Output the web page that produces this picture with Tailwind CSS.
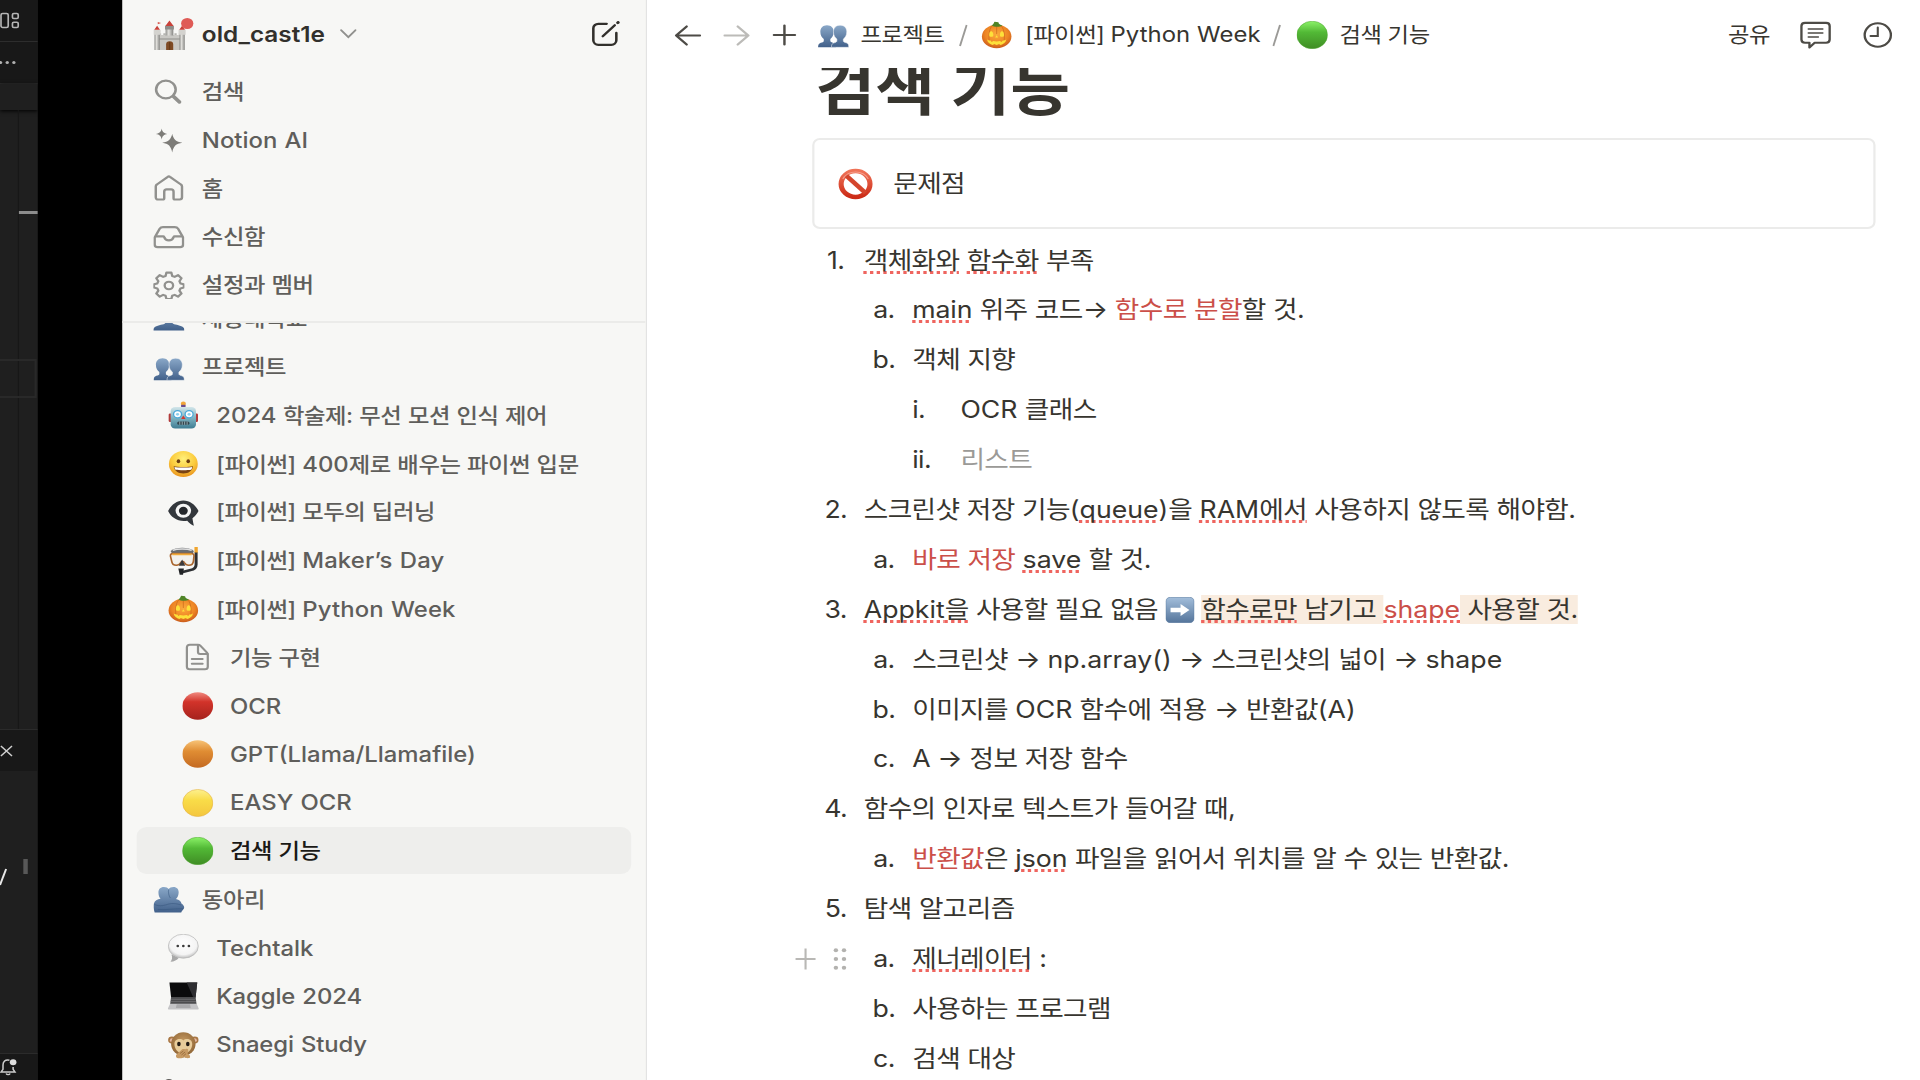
<!DOCTYPE html>
<html lang="ko">
<head>
<meta charset="utf-8">
<title>검색 기능</title>
<script src="https://cdn.jsdelivr.net/npm/@tailwindcss/browser@4"></script>
</head>
<body class="h-[1080px] w-[1920px] overflow-hidden bg-black font-[Inter,'Noto_Sans_CJK_KR',sans-serif]">

<!-- shared icon symbols -->
<svg class="absolute h-0 w-0" aria-hidden="true">
  <defs>
    <linearGradient id="gBlue" x1="0" y1="0" x2="0" y2="1"><stop offset="0" stop-color="#8aa8c8"/><stop offset="1" stop-color="#41608a"/></linearGradient>
    <linearGradient id="gRed" x1="0" y1="0" x2="0" y2="1"><stop offset="0" stop-color="#f08a80"/><stop offset=".35" stop-color="#d2332a"/><stop offset="1" stop-color="#a5231d"/></linearGradient>
    <linearGradient id="gOrange" x1="0" y1="0" x2="0" y2="1"><stop offset="0" stop-color="#f7c377"/><stop offset=".4" stop-color="#e08d33"/><stop offset="1" stop-color="#c46a22"/></linearGradient>
    <linearGradient id="gYellow" x1="0" y1="0" x2="0" y2="1"><stop offset="0" stop-color="#fdf08e"/><stop offset=".4" stop-color="#f9dc48"/><stop offset="1" stop-color="#f4c63e"/></linearGradient>
    <linearGradient id="gGreen" x1="0" y1="0" x2="0" y2="1"><stop offset="0" stop-color="#8bf268"/><stop offset=".4" stop-color="#52b936"/><stop offset="1" stop-color="#3f8c24"/></linearGradient>
    <radialGradient id="gFace" cx=".5" cy=".3" r=".75"><stop offset="0" stop-color="#fff07a"/><stop offset=".55" stop-color="#fbcb3c"/><stop offset="1" stop-color="#e78d1c"/></radialGradient>
    <radialGradient id="gPump" cx=".5" cy=".4" r=".65"><stop offset="0" stop-color="#fbab3c"/><stop offset=".6" stop-color="#ee8524"/><stop offset="1" stop-color="#c2521a"/></radialGradient>
    <linearGradient id="gBot" x1="0" y1="0" x2="0" y2="1"><stop offset="0" stop-color="#d3e6ea"/><stop offset=".5" stop-color="#7fb4c2"/><stop offset="1" stop-color="#3f7c92"/></linearGradient>
    <radialGradient id="gBubble" cx=".5" cy=".4" r=".6"><stop offset="0" stop-color="#fff"/><stop offset=".75" stop-color="#f4f4f4"/><stop offset="1" stop-color="#bdbdbd"/></radialGradient>
    <radialGradient id="gMonkey" cx=".5" cy=".4" r=".65"><stop offset="0" stop-color="#c69a62"/><stop offset="1" stop-color="#8c6233"/></radialGradient>
    <linearGradient id="gWall" x1="0" y1="0" x2="1" y2="0"><stop offset="0" stop-color="#8f8f8c"/><stop offset=".4" stop-color="#e2e1dd"/><stop offset="1" stop-color="#858582"/></linearGradient>
    <linearGradient id="gKey" x1="0" y1="0" x2="0" y2="1"><stop offset="0" stop-color="#a3bedb"/><stop offset="1" stop-color="#55759b"/></linearGradient>
    <linearGradient id="gBan" x1="0" y1="0" x2="0" y2="1"><stop offset="0" stop-color="#ef7257"/><stop offset="1" stop-color="#cc2c17"/></linearGradient>
    <symbol id="people" viewBox="0 0 28 28">
      <path fill="url(#gBlue)" d="M8.3 3.2c3.900 0 6 2.800 6 6.600 0 3.400-1.400 6-3 7.200v2.300c.4 1.100 3 1.500 4.100 2.600.6.7.9 2 .9 3.400H.3c0-2 .3-3.200 1.300-3.900 1.300-.8 3.400-1 3.800-2.100V17c-1.700-1.200-3.100-3.800-3.100-7.200 0-3.800 2.100-6.600 6-6.600z"/>
      <path fill="url(#gBlue)" stroke="#f4f6f8" stroke-width=".5" d="M20.100 3.200c3.900 0 6 2.800 6 6.600 0 3.400-1.400 6-3.100 7.200v2.300c.4 1.100 2.700 1.300 3.700 2.100 1 .7 1.200 1.900 1.200 3.900H12.300c0-2 .3-3.200 1.300-3.900 1.200-.8 3.200-1 3.600-2.100V17c-1.700-1.200-3.100-3.800-3.100-7.200 0-3.800 2.100-6.600 6-6.600z"/>
    </symbol>
    <symbol id="person" viewBox="0 0 28 28">
      <path fill="url(#gBlue)" d="M14 1c4.500 0 6.500 3.200 6.500 7 0 3.400-1.500 6-3.200 7.200v3c1 1.400 6.500 1.700 9 3.600 1.200.9 1.700 2 1.700 3.600H0c0-1.600.5-2.700 1.700-3.600 2.500-1.900 8-2.200 9-3.600v-3C9 14 7.500 11.400 7.500 8c0-3.800 2-7 6.500-7z"/>
    </symbol>
    <symbol id="pumpkin" viewBox="0 0 28 28">
      <ellipse cx="14" cy="15.500" rx="13.300" ry="11.800" fill="url(#gPump)"/>
      <path d="M10 4.800C6.500 8 5.800 21 9.500 26M18 4.800c3.500 3.200 4.200 16.200.5 21.200M14 5v8" stroke="#c9651b" stroke-width=".9" fill="none" opacity=".7"/>
      <path d="M9.500 4.300c2-1.200 1.800-2.600 2.600-3.600l3.500.5c.1 1.500.8 2.300 3.400 3.200-2 1.900-7.300 2-9.500-.1z" fill="#4f8426"/>
      <path d="M7.500 15.200c-.6-2.700.5-5 1.600-5s2.300 2.300 1.800 5c-1 .8-2.500.8-3.400 0zM17.100 15.200c-.5-2.700.6-5 1.700-5s2.200 2.300 1.700 5c-1 .8-2.500.8-3.400 0zM14 14.200l1.300 2.300h-2.600zM5.300 18.200c1 1.100 2.200 1.400 3.300 1.400l.9 1.300 1.500-.9c2 .5 4 .5 6 0l1.500.9.9-1.300c1.100 0 2.300-.3 3.300-1.400-.5 3.200-2.500 5-5.300 5.900l-1.200-1.200-2.200 1.200-2.200-1.200-1.300 1.200c-2.700-.9-4.700-2.700-5.200-5.900z" fill="#fde03a"/>
    </symbol>
    <symbol id="green" viewBox="0 0 28 28"><circle cx="14" cy="14" r="13.800" fill="url(#gGreen)" stroke="#4ea52f" stroke-width=".5"/></symbol>
  </defs>
</svg>

<div class="flex h-[1080px] w-[1728px] origin-top-left scale-x-[1.11111] bg-black">

  <!-- editor window edge -->
  <aside class="relative flex w-[34px] shrink-0 flex-col overflow-hidden bg-[#1f1f1f]">
    <div class="flex h-[42px] items-center border-b border-[#2d2d2d] bg-[#181818]">
      <svg class="h-6 w-[18px] shrink-0" viewBox="0 0 18 24" fill="none" stroke="#b4b4b4" stroke-width="1.500"><rect x=".9" y="4.500" width="6.500" height="14" rx="1.500"/><rect x="11.200" y="4.500" width="5.200" height="5" rx="1.200"/><rect x="11.200" y="13.200" width="5.200" height="5.300" rx="1.200"/></svg>
    </div>
    <div class="-ml-[1px] flex h-[42px] items-center gap-[3.500px] border-b border-[#2d2d2d] bg-[#181818]">
      <i class="size-[2.500px] rounded-full bg-[#b0b0b0]"></i><i class="size-[2.500px] rounded-full bg-[#b0b0b0]"></i><i class="size-[2.500px] rounded-full bg-[#b0b0b0]"></i>
    </div>
    <div class="h-[26px] shrink-0 bg-[#1f1f1f] shadow-[0_1px_4px_#000]"></div>
    <div class="flex h-[619px] shrink-0">
      <div class="w-[17px] border-r border-[#171717]"></div>
      <div class="flex-1 pt-[101px]"><div class="h-[2.500px] bg-[#8d8d8d]"></div></div>
    </div>
    <div class="absolute top-[359px] -left-1 h-[39px] w-[37px] border-2 border-[#292929]"></div>
    <div class="flex h-[42px] shrink-0 items-center border-t border-[#2b2b2b] bg-[#181818]">
      <svg class="h-3 w-3" viewBox="0 0 12 12" stroke="#cfcfcf" stroke-width="1.300"><path d="M.8 1l10 10M10.800 1l-10 10"/></svg>
    </div>
    <div class="flex flex-1 items-start pt-[88px]">
      <svg class="mt-[9px] h-[20px] w-[7px]" viewBox="0 0 7 20" stroke="#e8e8e8" stroke-width="1.800"><path d="M5.500 1L0 17"/></svg>
      <div class="ml-[14px] h-[15px] w-[4px] bg-[#585858]"></div>
    </div>
    <div class="flex h-[27px] items-center border-t border-[#2b2b2b] bg-[#181818]">
      <svg class="-ml-px h-[18px] w-[17px]" viewBox="0 0 17 18" fill="none" stroke="#cccccc" stroke-width="1.400"><path d="M9.500 2.200C5.500 1.200 3.700 4 3.700 7v4.300L2 14h12.500l-1.700-2.700V9M6.500 15.500c.7 1.500 2.900 1.500 3.600 0"/><circle cx="12.800" cy="4.300" r="3" fill="#ddd" stroke="none"/></svg>
    </div>
  </aside>
  <div class="w-[76px] shrink-0 bg-black"></div>

  <!-- sidebar -->
  <nav class="flex w-[472px] shrink-0 flex-col overflow-hidden border-r border-[#efefed] bg-[#f7f7f5] text-[21px] font-medium tracking-[-0.4px] text-[#5f5e5b] [word-spacing:0.7px]">
    <div class="shrink-0 border-b-2 border-[#ebebe9] px-[12.600px] pb-[12px]">
      <div class="flex h-[67.300px] items-center pr-[10px] pl-[15.700px]">
        <div class="relative size-[28px]">
          <svg class="size-[30px]" viewBox="0 0 30 30">
            <rect x="5" y="15" width="19" height="15" fill="#c9c8c4"/><path d="M5 15v-1.800h2V15h2v-1.800h2V15h8v-1.800h2V15h2v-1.800h1V15z" fill="#b5b4b0"/>
            <path d="M5 19h19" stroke="#8f8e8a"/>
            <rect x="1" y="11" width="4.800" height="19" fill="url(#gWall)"/><rect x="23.500" y="11" width="4.800" height="19" fill="url(#gWall)"/>
            <rect x="11" y="5.500" width="7" height="10" fill="url(#gWall)"/><rect x="10.500" y="6" width="8" height="3.500" fill="#8e8d8a"/>
            <rect x=".2" y="9.800" width="6.400" height="5" fill="#d4d3cf"/><rect x="22.700" y="9.800" width="6.400" height="5" fill="#d4d3cf"/>
            <path d="M.8 9.800l2.600-4 2.600 4zM10.800 6l3.700-5.500L18.200 6zM23.300 9.800l2.600-4 2.600 4z" fill="#c9423a"/><path d="M4 2l3 1-3 1.200z" fill="#d8544a"/>
            <path d="M11.500 30v-5.500a3.200 3.200 0 016.400 0V30z" fill="#7e4a24"/><path d="M14.700 22v8" stroke="#5c3213" stroke-width=".7"/>
          </svg>
          <i class="absolute -top-[2px] left-[24.500px] size-[11px] rounded-full bg-[#df5b56]"></i>
        </div>
        <span class="ml-[15.400px] pt-px text-[21.900px] font-semibold tracking-normal text-[#32302c]">old_cast1e</span>
        <svg class="ml-[13.500px] h-[10px] w-[15px]" viewBox="0 0 15 10" fill="none" stroke="#91918e" stroke-width="1.700" stroke-linecap="round"><path d="M1 1.200l6.500 7 6.500-7"/></svg>
        <svg class="mt-px ml-auto size-[26px]" viewBox="0 0 26 26" fill="none" stroke="#32302c" stroke-width="2.300" stroke-linecap="round" stroke-linejoin="round"><path d="M14 2.800H6.500a4.500 4.500 0 00-4.500 4.500v12A4.500 4.500 0 006.500 23.800h11.700a4.500 4.500 0 004.500-4.500V12"/><path d="M10.500 15.200L21.300 4.300"/><path d="M24 1.700l.3-.3" stroke-width="2.800"/></svg>
      </div>
      <div class="flex h-[48.400px] items-center gap-[15.400px] pl-[15.700px]">
        <svg class="size-[28px]" viewBox="0 0 28 28" fill="none" stroke="#91918e" stroke-linecap="round"><circle cx="11.300" cy="12.500" r="8.800" stroke-width="2.300"/><path d="M18.200 19.500l5.300 5.500" stroke-width="3.400"/></svg>
        <span>검색</span>
      </div>
      <div class="flex h-[48.400px] items-center gap-[15.400px] pl-[15.700px]">
        <svg class="size-[28px]" viewBox="0 0 28 28" fill="#7d7c78"><path d="M17 7.700c1.100 5.500 3.200 8 9.200 9-6 1-8.100 3.400-9.200 9.700-1.100-6.300-3.200-8.700-9-9.700 5.800-1 7.900-3.500 9-9zM7.500 2.500c.6 3.400 1.900 4.800 5.300 5.500-3.400.6-4.700 2-5.300 5.400-.6-3.400-1.900-4.800-5.300-5.400 3.400-.7 4.700-2.100 5.300-5.500z"/></svg>
        <span class="text-[21.500px] tracking-normal">Notion AI</span>
      </div>
      <div class="flex h-[48.400px] items-center gap-[15.400px] pl-[15.700px]">
        <svg class="size-[28px]" viewBox="0 0 28 28" fill="none" stroke="#91918e" stroke-width="2.200" stroke-linejoin="round"><path d="M2.200 12.500c0-.8.300-1.500 1-2L13 2.800c.6-.5 1.400-.5 2 0l9.800 7.700c.7.500 1 1.200 1 2v10.800c0 1.300-.8 2.200-2.100 2.200h-4.200c-.8 0-1.300-.5-1.300-1.300v-6.400c0-1.500-.8-2.400-2.200-2.400h-4c-1.400 0-2.200.9-2.200 2.400v6.400c0 .8-.5 1.300-1.300 1.300H4.300c-1.300 0-2.100-.9-2.100-2.200z"/></svg>
        <span>홈</span>
      </div>
      <div class="flex h-[48.400px] items-center gap-[15.400px] pl-[15.700px]">
        <svg class="size-[28px]" viewBox="0 0 28 28" fill="none" stroke="#91918e" stroke-width="2.200" stroke-linejoin="round"><path d="M1.200 14.500l4.500-8.700c.7-1.200 1.600-1.700 3-1.700h10.600c1.400 0 2.300.5 3 1.700l4.500 8.700v7c0 1.700-1 2.700-2.700 2.700H3.900c-1.700 0-2.700-1-2.700-2.700z"/><path d="M1.500 13.300h7.300c.5 0 .8.300 1 .8.600 2 2.100 3.300 4.200 3.300s3.600-1.300 4.200-3.300c.2-.5.500-.8 1-.8h7.300"/></svg>
        <span>수신함</span>
      </div>
      <div class="flex h-[48.400px] items-center gap-[15.400px] pl-[15.700px]">
        <svg class="size-[28px]" viewBox="0 0 28 28" fill="none" stroke="#91918e" stroke-width="2.100" stroke-linejoin="round"><path d="M11.800 1.600h4.400l.8 3.400 2.200.9 3-1.800 3.100 3.100-1.800 3 .9 2.200 3 .8v3.400l-3 .8-.9 2.200 1.800 3-3.100 3.100-3-1.800-2.200.9-.8 3.200h-4.400l-.8-3.200-2.200-.9-3 1.800-3.100-3.100 1.800-3-.9-2.200-3-.8v-3.400l3-.8.9-2.200-1.800-3 3.100-3.100 3 1.800 2.200-.9z"/><circle cx="14" cy="14.500" r="3.800"/></svg>
        <span>설정과 멤버</span>
      </div>
    </div>

    <div class="min-h-0 flex-1 overflow-hidden px-[12.600px]">
      <div class="-mt-[28.800px] flex h-[48.400px] items-center gap-[15.400px] pl-[15.700px]"><svg class="size-[28px]"><use href="#person"/></svg><span>세종대학교</span></div>
      <div class="flex h-[48.400px] items-center gap-[15.400px] pl-[15.700px]"><svg class="mt-[3px] size-[28px]"><use href="#people"/></svg><span>프로젝트</span></div>

      <div class="flex h-[48.400px] items-center gap-[15.200px] pl-[28.900px]">
        <svg class="size-[28px]" viewBox="0 0 28 28"><circle cx="14" cy="2.800" r="2.300" fill="#f2a63a"/><rect x="12" y="3.800" width="4" height="3" fill="#6b4b8d"/><rect x=".8" y="12.500" width="3.500" height="8.500" rx="1.200" fill="#b23a3a"/><rect x="23.700" y="12.500" width="3.500" height="8.500" rx="1.200" fill="#b23a3a"/><rect x="2.600" y="6" width="22.800" height="21.500" rx="4" fill="url(#gBot)"/><circle cx="8.800" cy="13.300" r="3.600" fill="#fff" stroke="#4ca8d8" stroke-width="1.200"/><circle cx="19.200" cy="13.300" r="3.600" fill="#fff" stroke="#4ca8d8" stroke-width="1.200"/><circle cx="8.800" cy="13.300" r="1.400" fill="#8fd0ee"/><circle cx="19.200" cy="13.300" r="1.400" fill="#8fd0ee"/><path d="M14 14.500l2 3.600h-4z" fill="#d8352d"/><rect x="8.500" y="20.500" width="11" height="3.300" rx="1.500" fill="#33444c"/><path d="M10.800 20.500v3.300M13 20.500v3.300M15.200 20.500v3.300M17.400 20.500v3.300" stroke="#b8d0d6" stroke-width=".7"/></svg>
        <span><span class="text-[21.500px] tracking-normal">2024</span> 학술제: 무선 모션 인식 제어</span>
      </div>
      <div class="flex h-[48.400px] items-center gap-[15.200px] pl-[28.900px]">
        <svg class="size-[28px]" viewBox="0 0 28 28"><circle cx="14" cy="14" r="13" fill="url(#gFace)"/><ellipse cx="9.600" cy="11.200" rx="1.600" ry="2" fill="#6b3c10"/><ellipse cx="18.400" cy="11.200" rx="1.600" ry="2" fill="#6b3c10"/><path d="M5.300 16.200c2.500.9 14.900.9 17.400 0-.5 4.600-3.900 7.200-8.700 7.200s-8.200-2.600-8.700-7.200z" fill="#7a4314"/><path d="M6 17c2.600.7 13.400.7 16 0-.2 1.500-.5 2.300-1 2.800-3 .6-11 .6-14 0-.5-.5-.8-1.300-1-2.800z" fill="#fff"/></svg>
        <span>[파이썬] <span class="text-[21.500px] tracking-normal">400</span>제로 배우는 파이썬 입문</span>
      </div>
      <div class="flex h-[48.400px] items-center gap-[15.200px] pl-[28.900px]">
        <svg class="size-[28px]" viewBox="0 0 28 28"><path d="M.3 13C3 7 8 2.500 14 2.500S25 7 27.700 13c-1.300 2.800-3.300 5.400-5.500 7.200.4 3 .8 5 1.300 7.600-2-1-4.500-3-6-5.100C9.300 24.200 3 19.500.3 13z" fill="#33373c"/><circle cx="14" cy="12.800" r="7" fill="#f5f5f5"/><circle cx="14" cy="12.800" r="4" fill="#24272b"/></svg>
        <span>[파이썬] 모두의 딥러닝</span>
      </div>
      <div class="flex h-[48.400px] items-center gap-[15.200px] pl-[28.900px]">
        <svg class="size-[28px]" viewBox="0 0 28 28" fill="none"><path d="M25.500 0v6" stroke="#f0a52e" stroke-width="3"/><path d="M25.500 5.500v12c0 4-2 5-5 5.500l-7 2" stroke="#2e3033" stroke-width="2.700"/><path d="M9.500 21.500h5l-.8 6.200h-3z" fill="#222427"/><path d="M2.500 4c5-4.300 16-4.300 21 0l-1 3H4z" fill="#6a6d70"/><path d="M4.500 3.400c4-1.800 13-1.800 17 0" stroke="#e0e0e0" stroke-width="1.400"/><path d="M4.500 6.500h16.800c1.700 0 2.400 1 2.300 2.600l-.5 5c-.3 2.800-1.700 4.200-4.200 4.200-2.400 0-3.200-1.300-4-2.800-.6-1.200-2.600-1.200-3.200 0-.8 1.500-1.600 2.800-4 2.800-2.500 0-3.900-1.400-4.200-4.200L2.400 9.100c-.1-1.600.4-2.600 2.100-2.600z" fill="#f3f1ec" stroke="#a8642c" stroke-width="1.500"/><path d="M4 7.300h17.500" stroke="#f1ab3a" stroke-width="1.700"/><path d="M12.900 12.500l2.900 6.300H10z" fill="#3a3a3c"/></svg>
        <span>[파이썬] <span class="text-[21.500px] tracking-[0.100px]">Maker’s Day</span></span>
      </div>
      <div class="flex h-[48.400px] items-center gap-[15.200px] pl-[28.900px]"><svg class="size-[28px]"><use href="#pumpkin"/></svg><span>[파이썬] <span class="text-[21.500px] tracking-[0.100px]">Python Week</span></span></div>

      <div class="flex h-[48.400px] items-center gap-[15px] pl-[41.400px]">
        <svg class="size-[28px]" viewBox="0 0 28 28" fill="none" stroke="#91918e" stroke-width="2" stroke-linejoin="round" stroke-linecap="round"><path d="M4.200 4.400c0-1.700.9-2.600 2.600-2.600h7.400c.9 0 1.500.2 2.100.9l6 6.900c.5.600.7 1.100.7 1.900v12.200c0 1.700-.9 2.600-2.600 2.600H6.800c-1.700 0-2.600-.9-2.600-2.600z"/><path d="M14.200 2v7c0 1.300.7 2 2 2h6.600M8.700 16h9.600M8.700 20.800h9.600"/></svg>
        <span>기능 구현</span>
      </div>
      <div class="flex h-[48.400px] items-center gap-[15px] pl-[41.400px]"><svg class="size-[28px]" viewBox="0 0 28 28"><circle cx="14" cy="14" r="13.800" fill="url(#gRed)"/></svg><span class="text-[21.500px] tracking-normal">OCR</span></div>
      <div class="flex h-[48.400px] items-center gap-[15px] pl-[41.400px]"><svg class="size-[28px]" viewBox="0 0 28 28"><circle cx="14" cy="14" r="13.800" fill="url(#gOrange)"/></svg><span class="text-[21.500px] tracking-normal">GPT(Llama/Llamafile)</span></div>
      <div class="flex h-[48.400px] items-center gap-[15px] pl-[41.400px]"><svg class="size-[28px]" viewBox="0 0 28 28"><circle cx="14" cy="14" r="13.600" fill="url(#gYellow)" stroke="#e2ad3c" stroke-width=".5"/></svg><span class="text-[21.500px] tracking-normal">EASY OCR</span></div>
      <div class="flex h-[48.400px] items-center py-[0.700px]"><div class="flex h-full w-full items-center gap-[15px] rounded-[9px] bg-[#eeeeec] pl-[41.400px] text-[#1a1916]"><svg class="size-[28px]"><use href="#green"/></svg><span>검색 기능</span></div></div>

      <div class="flex h-[48.400px] items-center gap-[15.400px] pl-[15.700px]">
        <svg class="size-[28px]" viewBox="0 0 28 28"><path fill="url(#gBlue)" d="M9.500 2c2.200 0 3.500.8 4.300 2 .8-1.200 2.200-2 4.300-2 3.200 0 4.700 2.300 4.700 5.300 0 2.800-1 5.300-2.400 6.700 3 .8 4.600 2.200 4.900 4.500 1.800 1.500 2.600 2.800 2.600 4.200-.8 2-2.300 2.800-2.800 4.800H1.200C.2 24.500 0 20.500.5 18.500c.8-3 3-4.200 6-4.700C5.200 12.300 4.600 10 4.600 7.300 4.600 4.300 6.200 2 9.500 2z"/><path d="M1 19.500c5 2.500 10 .5 13-.500s7-.5 11 1M4 24.500c7 .8 14-1 23-.8M13.800 4.500c-.6 3 .2 6.500 1.500 8.500" stroke="#35557c" stroke-width=".8" fill="none" opacity=".6"/></svg>
        <span>동아리</span>
      </div>
      <div class="flex h-[48.400px] items-center gap-[15.200px] pl-[28.900px]">
        <svg class="size-[28px]" viewBox="0 0 28 28"><path d="M3.300 20.500c1 3 .7 5-.8 7.200 3.500-.2 5.500-1.500 7.500-4z" fill="#a8a8a8"/><ellipse cx="14" cy="12.200" rx="13.500" ry="12" fill="url(#gBubble)" stroke="#b9b9b9" stroke-width=".7"/><g fill="#3b3b3b"><circle cx="9" cy="12" r="1.200"/><circle cx="14" cy="12" r="1.200"/><circle cx="19" cy="12" r="1.200"/></g></svg>
        <span class="text-[21.500px] tracking-normal">Techtalk</span>
      </div>
      <div class="flex h-[48.400px] items-center gap-[15.200px] pl-[28.900px]">
        <svg class="size-[28px]" viewBox="0 0 28 28"><path d="M1.500.5h25L25 15.500H3z" fill="#0b0b0c"/><path d="M17 .5h9.500L25 15.500h-2z" fill="#2e2e31"/><path d="M3 15h22l.9 7.200H2.100z" fill="#4b4b4d"/><path d="M3 17.300h22M2.600 19.600h22.800" stroke="#747477" stroke-width=".7"/><path d="M2.100 21.800h23.800l2 4.700c0 .7-.4 1-1.100 1H1.200c-.7 0-1.100-.3-1.100-1z" fill="#c4c4c6"/><path d="M8 22.300h12l.7 3.800H7.300z" fill="#a9a9ab"/></svg>
        <span class="text-[21.500px] tracking-[-0.100px]">Kaggle 2024</span>
      </div>
      <div class="flex h-[48.400px] items-center gap-[15.200px] pl-[28.900px]">
        <svg class="size-[28px]" viewBox="0 0 28 28"><circle cx="3.700" cy="9" r="3.400" fill="#a87744"/><circle cx="24.300" cy="9" r="3.400" fill="#a87744"/><circle cx="3.800" cy="9.200" r="1.900" fill="#e7b9a5"/><circle cx="24.200" cy="9.200" r="1.900" fill="#e7b9a5"/><ellipse cx="14" cy="13" rx="11" ry="11.700" fill="url(#gMonkey)"/><path d="M14 9.500c2-2.500 8-2 8 3.500 0 4-2.500 9.500-8 9.500S6 17 6 13c0-5.500 6-6 8-3.500z" fill="#e8cc9a"/><ellipse cx="10" cy="13" rx="1.600" ry="2.200" fill="#221a14"/><ellipse cx="18" cy="13" rx="1.600" ry="2.200" fill="#221a14"/><path d="M8 26.800c-1.300-1.500-.5-3.500 1-4.500l4-4c1-.8 2.400.4 3.300-.3 1.500-.8 2.600.5 2 2l-.6 2.600c1.800.8 2.800 2.600 2.300 4.200-2 .8-4 .4-5-.5-1.500 1-5 1.500-7 .5z" fill="#c79a63"/><path d="M11 22.500l3-2.500M12.300 24l3.300-3M14 25l2.400-2.300" stroke="#8d6234" stroke-width=".7"/></svg>
        <span class="text-[21.500px] tracking-[-0.100px]">Snaegi Study</span>
      </div>
      <div class="flex h-[48.400px] pt-[9px] pl-[22px]"><svg class="size-[28px]" viewBox="0 0 28 28"><circle cx="7" cy="6" r="5" fill="#5b5a58"/></svg></div>
    </div>
  </nav>

  <!-- page -->
  <main class="flex min-w-0 flex-1 flex-col overflow-hidden bg-white text-[#37352f]">
    <header class="flex h-[69px] shrink-0 items-center pl-[25px] text-[21px] tracking-[-0.4px]">
      <svg class="h-[24px] w-[24px] shrink-0" viewBox="0 0 24 24" fill="none" stroke="#4d4b46" stroke-width="2.200" stroke-linecap="round" stroke-linejoin="round"><path d="M23 12.500H1.500M11 3.500l-9.500 9 9.500 9"/></svg>
      <svg class="ml-[20px] h-[24px] w-[24px] shrink-0" viewBox="0 0 24 24" fill="none" stroke="#bcbbb8" stroke-width="2.200" stroke-linecap="round" stroke-linejoin="round"><path d="M1 12.500h21.500M13 3.500l9.500 9-9.500 9"/></svg>
      <svg class="ml-[20px] h-[22px] w-[22px] shrink-0" viewBox="0 0 22 22" stroke="#4d4b46" stroke-width="2.200" stroke-linecap="round"><path d="M11 1.500v19M1.500 11h19"/></svg>
      <svg class="mt-[3px] ml-[19px] size-[28px] shrink-0"><use href="#people"/></svg>
      <span class="ml-[10.500px]">프로젝트</span>
      <svg class="ml-[12.500px] h-[24px] w-[8px] shrink-0" viewBox="0 0 8 24" stroke="#9b9a97" stroke-width="1.700"><path d="M7 2L1 23"/></svg>
      <svg class="ml-[12.500px] size-[28px] shrink-0"><use href="#pumpkin"/></svg>
      <span class="ml-[11.500px] whitespace-nowrap">[파이썬] <span class="text-[21.500px] tracking-[0.050px]">Python Week</span></span>
      <svg class="ml-[10.500px] h-[24px] w-[8px] shrink-0" viewBox="0 0 8 24" stroke="#9b9a97" stroke-width="1.700"><path d="M7 2L1 23"/></svg>
      <svg class="ml-[13.500px] size-[28px] shrink-0"><use href="#green"/></svg>
      <span class="ml-[11px]">검색 기능</span>
      <span class="ml-auto">공유</span>
      <svg class="ml-[27px] size-[28px] shrink-0" viewBox="0 0 28 28" fill="none" stroke="#4d4b46" stroke-width="2.100" stroke-linejoin="round" stroke-linecap="round"><path d="M4.500 1.900h19c2 0 3.200 1.200 3.200 3.200v13.500c0 2-1.200 3.200-3.200 3.200H13.200l-4.700 4.700v-4.700h-4c-2 0-3.200-1.200-3.200-3.200V5.100c0-2 1.200-3.200 3.200-3.200z"/><path d="M7.500 8h13M7.500 12h13M7.500 16h9" stroke-width="1.500"/></svg>
      <svg class="mr-[24px] ml-[28px] size-[28px] shrink-0" viewBox="0 0 28 28" fill="none" stroke="#4d4b46" stroke-width="2.100" stroke-linecap="round"><circle cx="14" cy="14" r="11.800"/><path d="M14 6.500V15H7.500" stroke-width="1.900"/></svg>
    </header>

    <div class="-mt-px min-h-0 flex-1 overflow-hidden pr-[40px] pl-[149px]">
      <h1 class="-mt-[14.500px] h-[70px] pl-[3px] text-[58.500px] leading-[70px] font-bold whitespace-nowrap">검색 기능</h1>
      <div class="mt-[14.500px] flex h-[91px] items-center rounded-[7px] border-2 border-[#ebebea] pl-[21px] text-[24px] tracking-[-0.600px]">
        <svg class="size-[32px]" viewBox="0 0 32 32" fill="none"><circle cx="16" cy="16" r="13" stroke="url(#gBan)" stroke-width="4.600"/><path d="M7 7l18 18" stroke="#d4452c" stroke-width="4.400"/><path d="M4.500 11a13 13 0 0123 0" stroke="#f7a896" stroke-width="1" opacity=".8"/></svg>
        <span class="ml-[18px]">문제점</span>
      </div>

      <div class="mt-[6.500px] -ml-[4px] text-[24px] leading-[49.900px] tracking-[-0.550px] [word-spacing:0.400px]">
        <div class="flex h-[49.900px]"><span class="w-[50.400px] text-center">1.</span><p class="whitespace-pre"><u class="decoration-[#ef655f] decoration-dotted decoration-[2.700px] underline-offset-[2px] [text-decoration-skip-ink:none]">객체화와</u> <u class="decoration-[#ef655f] decoration-dotted decoration-[2.700px] underline-offset-[2px] [text-decoration-skip-ink:none]">함수화</u> 부족</p></div>
        <div class="flex h-[49.900px] pl-[43px]"><span class="w-[51px] text-center">a.</span><p class="whitespace-pre"><u class="tracking-[-0.100px] decoration-[#ef655f] decoration-dotted decoration-[2.700px] underline-offset-[2px] [text-decoration-skip-ink:none]">main</u> 위주 코드→ <span class="text-[#cb4f49]">함수로 분할</span>할 것.</p></div>
        <div class="flex h-[49.900px] pl-[43px]"><span class="w-[51px] text-center">b.</span><p class="whitespace-pre">객체 지향</p></div>
        <div class="flex h-[49.900px] pl-[94px]"><span class="w-[43.400px]">i.</span><p class="whitespace-pre"><span class="tracking-normal">OCR</span> 클래스</p></div>
        <div class="flex h-[49.900px] pl-[94px]"><span class="w-[43.400px]">ii.</span><p class="whitespace-pre text-[#9b9a97]">리스트</p></div>
        <div class="flex h-[49.900px]"><span class="w-[50.400px] text-center">2.</span><p class="whitespace-pre">스크린샷 저장 기능<span class="tracking-normal">(<u class="decoration-[#ef655f] decoration-dotted decoration-[2.700px] underline-offset-[2px] [text-decoration-skip-ink:none]">queue</u>)</span>을 <u class="decoration-[#ef655f] decoration-dotted decoration-[2.700px] underline-offset-[2px] [text-decoration-skip-ink:none]"><span class="tracking-normal">RAM</span>에서</u> 사용하지 않도록 해야함.</p></div>
        <div class="flex h-[49.900px] pl-[43px]"><span class="w-[51px] text-center">a.</span><p class="whitespace-pre"><span class="text-[#cb4f49]">바로 저장</span> <u class="tracking-normal decoration-[#ef655f] decoration-dotted decoration-[2.700px] underline-offset-[2px] [text-decoration-skip-ink:none]">save</u> 할 것.</p></div>
        <div class="flex h-[49.900px]"><span class="w-[50.400px] text-center">3.</span><p class="flex whitespace-pre"><span><u class="decoration-[#ef655f] decoration-dotted decoration-[2.700px] underline-offset-[2px] [text-decoration-skip-ink:none]"><span class="tracking-normal">Appkit</span>을</u> 사용할 필요 없음 </span><svg class="mt-[12px] mr-[6.300px] size-[26px]" viewBox="0 0 26 26"><rect x=".3" y=".3" width="25.400" height="25.400" rx="4" fill="url(#gKey)" stroke="#5c7ba0" stroke-width=".6"/><path d="M4.500 10.800h9V7l8 6-8 6v-3.800h-9z" fill="#fff"/></svg><span><span class="bg-[#f9ecdf]"><u class="decoration-[#ef655f] decoration-dotted decoration-[2.700px] underline-offset-[2px] [text-decoration-skip-ink:none]">함수로만</u> 남기고 </span><u class="tracking-normal text-[#cb4f49] decoration-[#ef655f] decoration-dotted decoration-[2.700px] underline-offset-[2px] [text-decoration-skip-ink:none]">shape</u><span class="bg-[#f9ecdf]"> 사용할 것.</span></span></p></div>
        <div class="flex h-[49.900px] pl-[43px]"><span class="w-[51px] text-center">a.</span><p class="whitespace-pre">스크린샷 → <span class="tracking-normal">np.array()</span> → 스크린샷의 넓이 → <span class="tracking-normal">shape</span></p></div>
        <div class="flex h-[49.900px] pl-[43px]"><span class="w-[51px] text-center">b.</span><p class="whitespace-pre">이미지를 <span class="tracking-normal">OCR</span> 함수에 적용 → 반환값<span class="tracking-normal">(A)</span></p></div>
        <div class="flex h-[49.900px] pl-[43px]"><span class="w-[51px] text-center">c.</span><p class="whitespace-pre">A → 정보 저장 함수</p></div>
        <div class="flex h-[49.900px]"><span class="w-[50.400px] text-center">4.</span><p class="whitespace-pre">함수의 인자로 텍스트가 들어갈 때,</p></div>
        <div class="flex h-[49.900px] pl-[43px]"><span class="w-[51px] text-center">a.</span><p class="whitespace-pre"><span class="text-[#cb4f49]">반환값</span>은 <u class="tracking-normal decoration-[#ef655f] decoration-dotted decoration-[2.700px] underline-offset-[2px] [text-decoration-skip-ink:none]">json</u> 파일을 읽어서 위치를 알 수 있는 반환값.</p></div>
        <div class="flex h-[49.900px]"><span class="w-[50.400px] text-center">5.</span><p class="whitespace-pre">탐색 알고리즘</p></div>
        <div class="relative flex h-[49.900px] pl-[43px]">
          <div class="absolute top-[13px] -left-[12.500px] flex items-center gap-[14px]">
            <svg class="h-[22px] w-[20px]" viewBox="0 0 20 22" stroke="#b9b8b5" stroke-width="1.900"><path d="M10 .5v21M1 11h18"/></svg>
            <svg class="h-[24px] w-[14px]" viewBox="0 0 14 24" fill="#b3b2af"><circle cx="3.300" cy="3.300" r="2"/><circle cx="10.600" cy="3.300" r="2"/><circle cx="3.300" cy="12" r="2"/><circle cx="10.600" cy="12" r="2"/><circle cx="3.300" cy="20.700" r="2"/><circle cx="10.600" cy="20.700" r="2"/></svg>
          </div>
          <span class="w-[51px] text-center">a.</span><p class="whitespace-pre"><u class="decoration-[#ef655f] decoration-dotted decoration-[2.700px] underline-offset-[2px] [text-decoration-skip-ink:none]">제너레이터</u> :</p></div>
        <div class="flex h-[49.900px] pl-[43px]"><span class="w-[51px] text-center">b.</span><p class="whitespace-pre">사용하는 프로그램</p></div>
        <div class="flex h-[49.900px] pl-[43px]"><span class="w-[51px] text-center">c.</span><p class="whitespace-pre">검색 대상</p></div>
      </div>
    </div>
  </main>
</div>
</body>
</html>
